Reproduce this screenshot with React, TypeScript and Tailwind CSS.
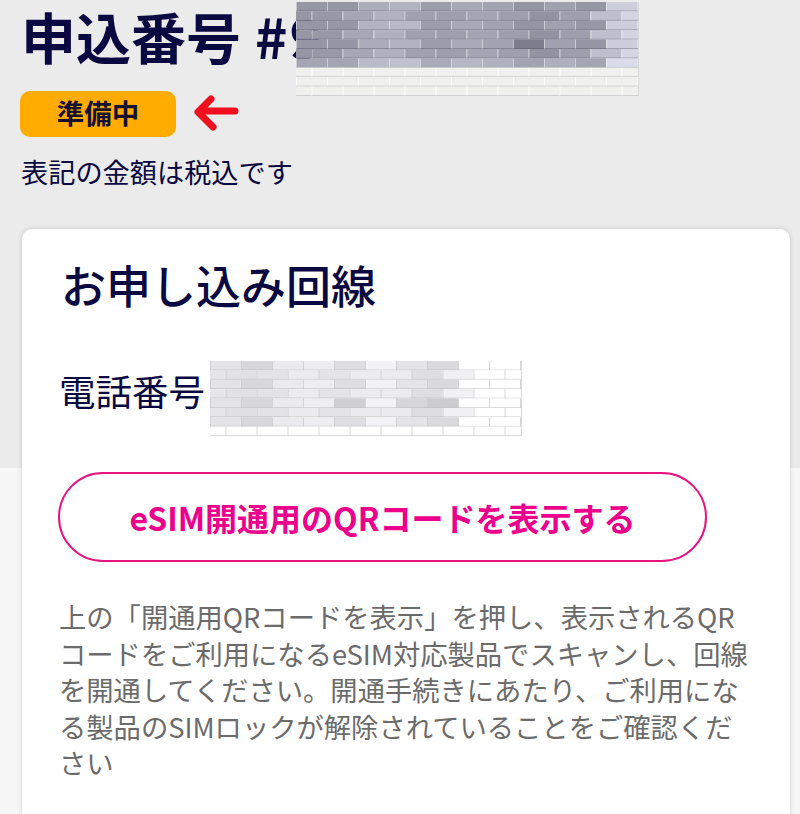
const FONT = "font-['Noto_Sans_CJK_JP','Noto_Sans',sans-serif]";

const ORDER_EVEN = [150, 150, 172, 178, 156, 168, 162, 148, 160, 150, 205, 205];
const ORDER_ODD = [150, 152, 166, 176, 160, 158, 164, 158, 146, 158, 190, 212, 212];
const PHONE_EVEN = [228, 216, 235, 238, 222, 243, 228, 218];
const PHONE_ODD = [230, 225, 227, 236, 228, 236, 236, 222, 241];

function BrickMask({
  width,
  height,
  rows,
  fill,
  edge,
  light,
}: {
  width: number;
  height: number;
  rows: number;
  fill: (c: number, r: number) => string;
  edge: (r: number) => string;
  light: (r: number) => string;
}) {
  const rowH = height / rows;
  const brick = 31;
  const bricks = [];
  for (let r = 0; r < rows; r++) {
    const offset = r % 2 === 0 ? 0 : -15.5;
    const y = r * rowH;
    for (let c = 0; c < Math.ceil(width / brick) + 1; c++) {
      const x = c * brick + offset;
      bricks.push(
        <g key={`${r}-${c}`}>
          <rect x={x} y={y} width={brick} height={rowH} fill={fill(c, r)} />
          <line x1={x + 0.5} y1={y} x2={x + 0.5} y2={y + rowH} stroke={light(r)} strokeWidth="1" />
          <line x1={x} y1={y + rowH - 0.4} x2={x + brick} y2={y + rowH - 0.4} stroke={edge(r)} strokeWidth="0.8" />
        </g>
      );
    }
  }
  return (
    <svg width={width} height={height} viewBox={`0 0 ${width} ${height}`} className="block">
      {bricks}
      <line x1={width - 0.5} y1="0" x2={width - 0.5} y2={height} stroke="#d8d8d8" strokeWidth="1" />
    </svg>
  );
}

function orderFill(c: number, r: number) {
  if (r >= 7) return '#f0f0ef';
  const list = r % 2 === 0 ? ORDER_EVEN : ORDER_ODD;
  let v = list[Math.min(c, list.length - 1)];
  if (r === 4 && c === 7) v -= 24;
  if (r === 2 && (c === 2 || c === 3)) v += 6;
  if (r === 6) v += 14;
  return `rgb(${v},${v},${v + 14})`;
}

function phoneFill(c: number, r: number) {
  if (r >= 7) return '#ffffff';
  const list = r % 2 === 0 ? PHONE_EVEN : PHONE_ODD;
  if (c >= list.length) return '#ffffff';
  let v = list[c];
  if (r === 4 && (c === 4 || c === 6 || c === 7)) v -= 14;
  return `rgb(${v},${v},${v + 2})`;
}

const orderEdge = (r: number) => (r >= 6 ? 'rgba(190,190,195,0.9)' : 'rgba(70,70,90,0.45)');
const orderLight = (r: number) => (r >= 7 ? '#ffffff' : 'rgba(235,235,240,0.6)');
const phoneEdge = () => 'rgba(175,175,175,0.6)';
const phoneLight = () => 'rgba(205,205,205,0.8)';

export default function App() {
  return (
    <div
      className={`${FONT} relative h-[814px] w-[800px] overflow-hidden bg-[linear-gradient(#ebebeb_468px,#f7f7f7_468px)] text-[#0a0840]`}
    >
      <div className="pl-[20px]">
        <h1 className="flex pl-[1px] text-[55px] font-bold leading-[70px]">
          <span>申込番号</span>
          <span className="ml-[14px] mr-[2px]">#</span>
          <span>9</span>
        </h1>

        <div className="mt-[21px] flex items-center gap-[17px]">
          <span className="flex h-[46px] w-[156px] items-center justify-center rounded-[10px] bg-[#ffab00] pb-[3px] text-[27.5px] font-bold leading-none text-[#14102e]">
            準備中
          </span>
          <svg width="48" height="44" viewBox="0 0 48 44" fill="none">
            <path
              d="M42 19 H6 M18 7 L5 20 L20 35"
              stroke="#f00f1e"
              strokeWidth="7"
              strokeLinecap="round"
              strokeLinejoin="round"
            />
          </svg>
        </div>

        <p className="mt-[15px] pl-[1px] text-[27.2px] leading-[38px]">表記の金額は税込です</p>
      </div>

      <section className="ml-[22px] mt-[39px] h-[600px] w-[768px] rounded-t-[10px] bg-white pl-[37px] pt-[25px] shadow-[0_0_5px_rgba(0,0,0,0.16)]">
        <h2 className="pl-[2px] text-[45px] font-medium leading-[62px]">お申し込み回線</h2>

        <p className="mt-[49px] text-[36.5px] leading-[52px]">電話番号</p>

        <button
          type="button"
          className="-ml-px mt-[55px] block h-[90px] w-[649px] rounded-[45px] border-[2.5px] border-[#e5127f] bg-white text-center text-[32px] font-bold text-[#ec008c]"
        >
          eSIM開通用のQRコードを表示する
        </button>

        <p className="mt-[36px] w-[695px] text-[27.3px] leading-[36.5px] text-[#6b6b6b]">
          上の「開通用QRコードを表示」を押し、表示されるQRコードをご利用になるeSIM対応製品でスキャンし、回線を開通してください。開通手続きにあたり、ご利用になる製品のSIMロックが解除されていることをご確認ください
        </p>
      </section>

      {/* redaction overlays */}
      <div className="absolute left-[296px] top-[2px]">
        <BrickMask width={343} height={94} rows={10} fill={orderFill} edge={orderEdge} light={orderLight} />
      </div>
      <div className="absolute left-[210px] top-[361px]">
        <BrickMask width={312} height={75} rows={8} fill={phoneFill} edge={phoneEdge} light={phoneLight} />
      </div>
    </div>
  );
}
